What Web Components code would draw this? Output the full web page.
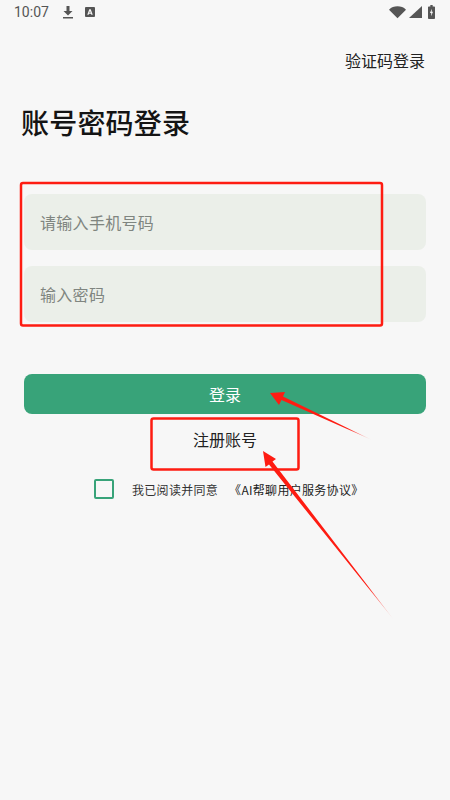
<!DOCTYPE html>
<html>
<head>
<meta charset="utf-8">
<style>
    html, body { margin: 0; height: 800px; overflow: hidden; background: #f7f7f7; }
    body { font-family: "Noto Sans CJK SC", "Noto Sans", sans-serif; }
</style>
</head>
<body>
<login-page>
    <status-bar slot="status"></status-bar>
    <top-action slot="action">验证码登录</top-action>
    <page-title slot="title">账号密码登录</page-title>
    <login-field slot="fields">请输入手机号码</login-field>
    <login-field slot="fields">输入密码</login-field>
    <primary-button slot="submit">登录</primary-button>
    <register-link slot="register">注册账号</register-link>
    <agree-row slot="agree"></agree-row>
</login-page>
<script>
class StatusBar extends HTMLElement {
    constructor() {
        super();
        this.attachShadow({ mode: 'open' });
        this.shadowRoot.innerHTML = `
            <style>
                :host {
                    display: flex;
                    align-items: center;
                    height: 24px;
                    padding: 0 15px 0 14px;
                    color: #555;
                    font: 14px/24px Roboto, sans-serif;
                }
                .left { display: flex; align-items: center; gap: 11px; flex: 1; }
                .icons { display: flex; align-items: center; gap: 11px; margin-left: 2px; }
                .right { display: flex; align-items: center; }
                svg { display: block; fill: #555; }
            </style>
            <div class="left">
                <span>10:07</span>
                <div class="icons">
                    <svg width="12" height="14" viewBox="0 0 12 14"><path d="M4.500 1h3v5h3L6 10.500 1.500 6h3zM1 12h10v1.500H1z"/></svg>
                    <svg width="10" height="10" viewBox="0 0 11 11"><path fill-rule="evenodd" d="M1 0h9a1 1 0 0 1 1 1v9a1 1 0 0 1-1 1H1a1 1 0 0 1-1-1V1a1 1 0 0 1 1-1zM4.700 2.500 2.500 8.500H4l.4-1.200h2.200L7 8.500h1.500L6.300 2.500zM5.500 4.300l.7 2H4.800z"/></svg>
                </div>
            </div>
            <div class="right">
                <svg width="17" height="14" viewBox="0 0 18 14"><path d="M0 4.500C2.500 2 5.500 1 9 1s6.500 1 9 3.500L9 13.500z"/></svg>
                <svg width="14" height="14" viewBox="0 0 14 14" style="margin-left:2px"><path d="M14 1v12H1z"/></svg>
                <svg width="7" height="14" viewBox="0 0 9 15" style="margin-left:6px" preserveAspectRatio="none"><path fill-rule="evenodd" d="M3 0h3v1.500h2a1 1 0 0 1 1 1V14a1 1 0 0 1-1 1H1a1 1 0 0 1-1-1V2.500a1 1 0 0 1 1-1h2zM5 4 2.500 8.500h1.700L3.800 12 6.500 7.200H4.800z"/></svg>
            </div>
        `;
    }
}

class TopAction extends HTMLElement {
    constructor() {
        super();
        this.attachShadow({ mode: 'open' });
        this.shadowRoot.innerHTML = `
            <style>
                :host {
                    display: block;
                    text-align: right;
                    color: #222;
                    font-size: 16px;
                    line-height: 24px;
                }
            </style>
            <slot></slot>
        `;
    }
}

class PageTitle extends HTMLElement {
    constructor() {
        super();
        this.attachShadow({ mode: 'open' });
        this.shadowRoot.innerHTML = `
            <style>
                :host {
                    display: block;
                    color: #141414;
                    font-size: 28px;
                    font-weight: 500;
                    line-height: 40px;
                    letter-spacing: 0.2px;
                }
            </style>
            <slot></slot>
        `;
    }
}

class LoginField extends HTMLElement {
    constructor() {
        super();
        this.attachShadow({ mode: 'open' });
        this.shadowRoot.innerHTML = `
            <style>
                :host {
                    display: flex;
                    align-items: center;
                    height: 56px;
                    padding: 0 16px;
                    border-radius: 8px;
                    background: #ebefe9;
                    color: #7f8580;
                    font-size: 16px;
                    letter-spacing: 0.3px;
                }
            </style>
            <slot></slot>
        `;
    }
}

class PrimaryButton extends HTMLElement {
    constructor() {
        super();
        this.attachShadow({ mode: 'open' });
        this.shadowRoot.innerHTML = `
            <style>
                :host {
                    display: flex;
                    align-items: center;
                    justify-content: center;
                    height: 40px;
                    border-radius: 8px;
                    background: #38a379;
                    color: #fff;
                    font-size: 16px;
                }
            </style>
            <slot></slot>
        `;
    }
}

class RegisterLink extends HTMLElement {
    constructor() {
        super();
        this.attachShadow({ mode: 'open' });
        this.shadowRoot.innerHTML = `
            <style>
                :host {
                    display: block;
                    text-align: center;
                    color: #222;
                    font-size: 16px;
                    line-height: 24px;
                }
            </style>
            <slot></slot>
        `;
    }
}

class AgreeRow extends HTMLElement {
    constructor() {
        super();
        this.attachShadow({ mode: 'open' });
        this.shadowRoot.innerHTML = `
            <style>
                :host {
                    display: flex;
                    align-items: center;
                    padding-left: 94px;
                    color: #333;
                    font-size: 12px;
                    letter-spacing: 0.3px;
                }
                .box {
                    box-sizing: border-box;
                    width: 20px;
                    height: 20px;
                    margin-right: 18px;
                    border: 2px solid #38a379;
                    border-radius: 2px;
                }
                .terms { margin-left: 11px; color: #222; }
            </style>
            <div class="box"></div>
            <span>我已阅读并同意</span>
            <span class="terms">《AI帮聊用户服务协议》</span>
        `;
    }
}

class LoginPage extends HTMLElement {
    constructor() {
        super();
        this.attachShadow({ mode: 'open' });
        this.shadowRoot.innerHTML = `
            <style>
                :host {
                    display: block;
                    position: relative;
                    height: 800px;
                    overflow: hidden;
                }
                .action { padding: 24px 25px 0 0; }
                .title { padding: 30px 21px 0; }
                .fields {
                    display: flex;
                    flex-direction: column;
                    gap: 16px;
                    margin: 52px 24px 0;
                }
                .submit { margin: 52px 24px 0; }
                .register { margin-top: 13px; }
                .agree { margin-top: 28px; }
                .marks { position: absolute; left: 0; top: 0; pointer-events: none; }
            </style>
            <slot name="status"></slot>
            <div class="action"><slot name="action"></slot></div>
            <div class="title"><slot name="title"></slot></div>
            <div class="fields"><slot name="fields"></slot></div>
            <div class="submit"><slot name="submit"></slot></div>
            <div class="register"><slot name="register"></slot></div>
            <div class="agree"><slot name="agree"></slot></div>
            <svg class="marks" width="450" height="800" viewBox="0 0 450 800">
                <defs>
                    <linearGradient id="a1" gradientUnits="userSpaceOnUse" x1="272" y1="394" x2="372" y2="440">
                        <stop offset="0" stop-color="#fe1c12"/>
                        <stop offset="0.75" stop-color="#fe1c12"/>
                        <stop offset="1" stop-color="#fe1c12" stop-opacity="0.05"/>
                    </linearGradient>
                    <linearGradient id="a2" gradientUnits="userSpaceOnUse" x1="263" y1="451" x2="394" y2="620">
                        <stop offset="0" stop-color="#fe1c12"/>
                        <stop offset="0.8" stop-color="#fe1c12"/>
                        <stop offset="1" stop-color="#fe1c12" stop-opacity="0.05"/>
                    </linearGradient>
                </defs>
                <rect x="21" y="183" width="361" height="142.500" rx="2" fill="none" stroke="#fe1c12" stroke-width="2.500"/>
                <rect x="151.500" y="418.500" width="147" height="51" rx="2" fill="none" stroke="#fe1c12" stroke-width="2.500"/>
                <path fill="url(#a1)" d="M270 393 285 392 283 396.500 372 440 281.500 400 279 405z"/>
                <path fill="url(#a2)" d="M263 451 276 459 272.500 461.500 394 620 269 464.500 265.500 467z"/>
            </svg>
        `;
    }
}

customElements.define('status-bar', StatusBar);
customElements.define('top-action', TopAction);
customElements.define('page-title', PageTitle);
customElements.define('login-field', LoginField);
customElements.define('primary-button', PrimaryButton);
customElements.define('register-link', RegisterLink);
customElements.define('agree-row', AgreeRow);
customElements.define('login-page', LoginPage);
</script>
</body>
</html>
